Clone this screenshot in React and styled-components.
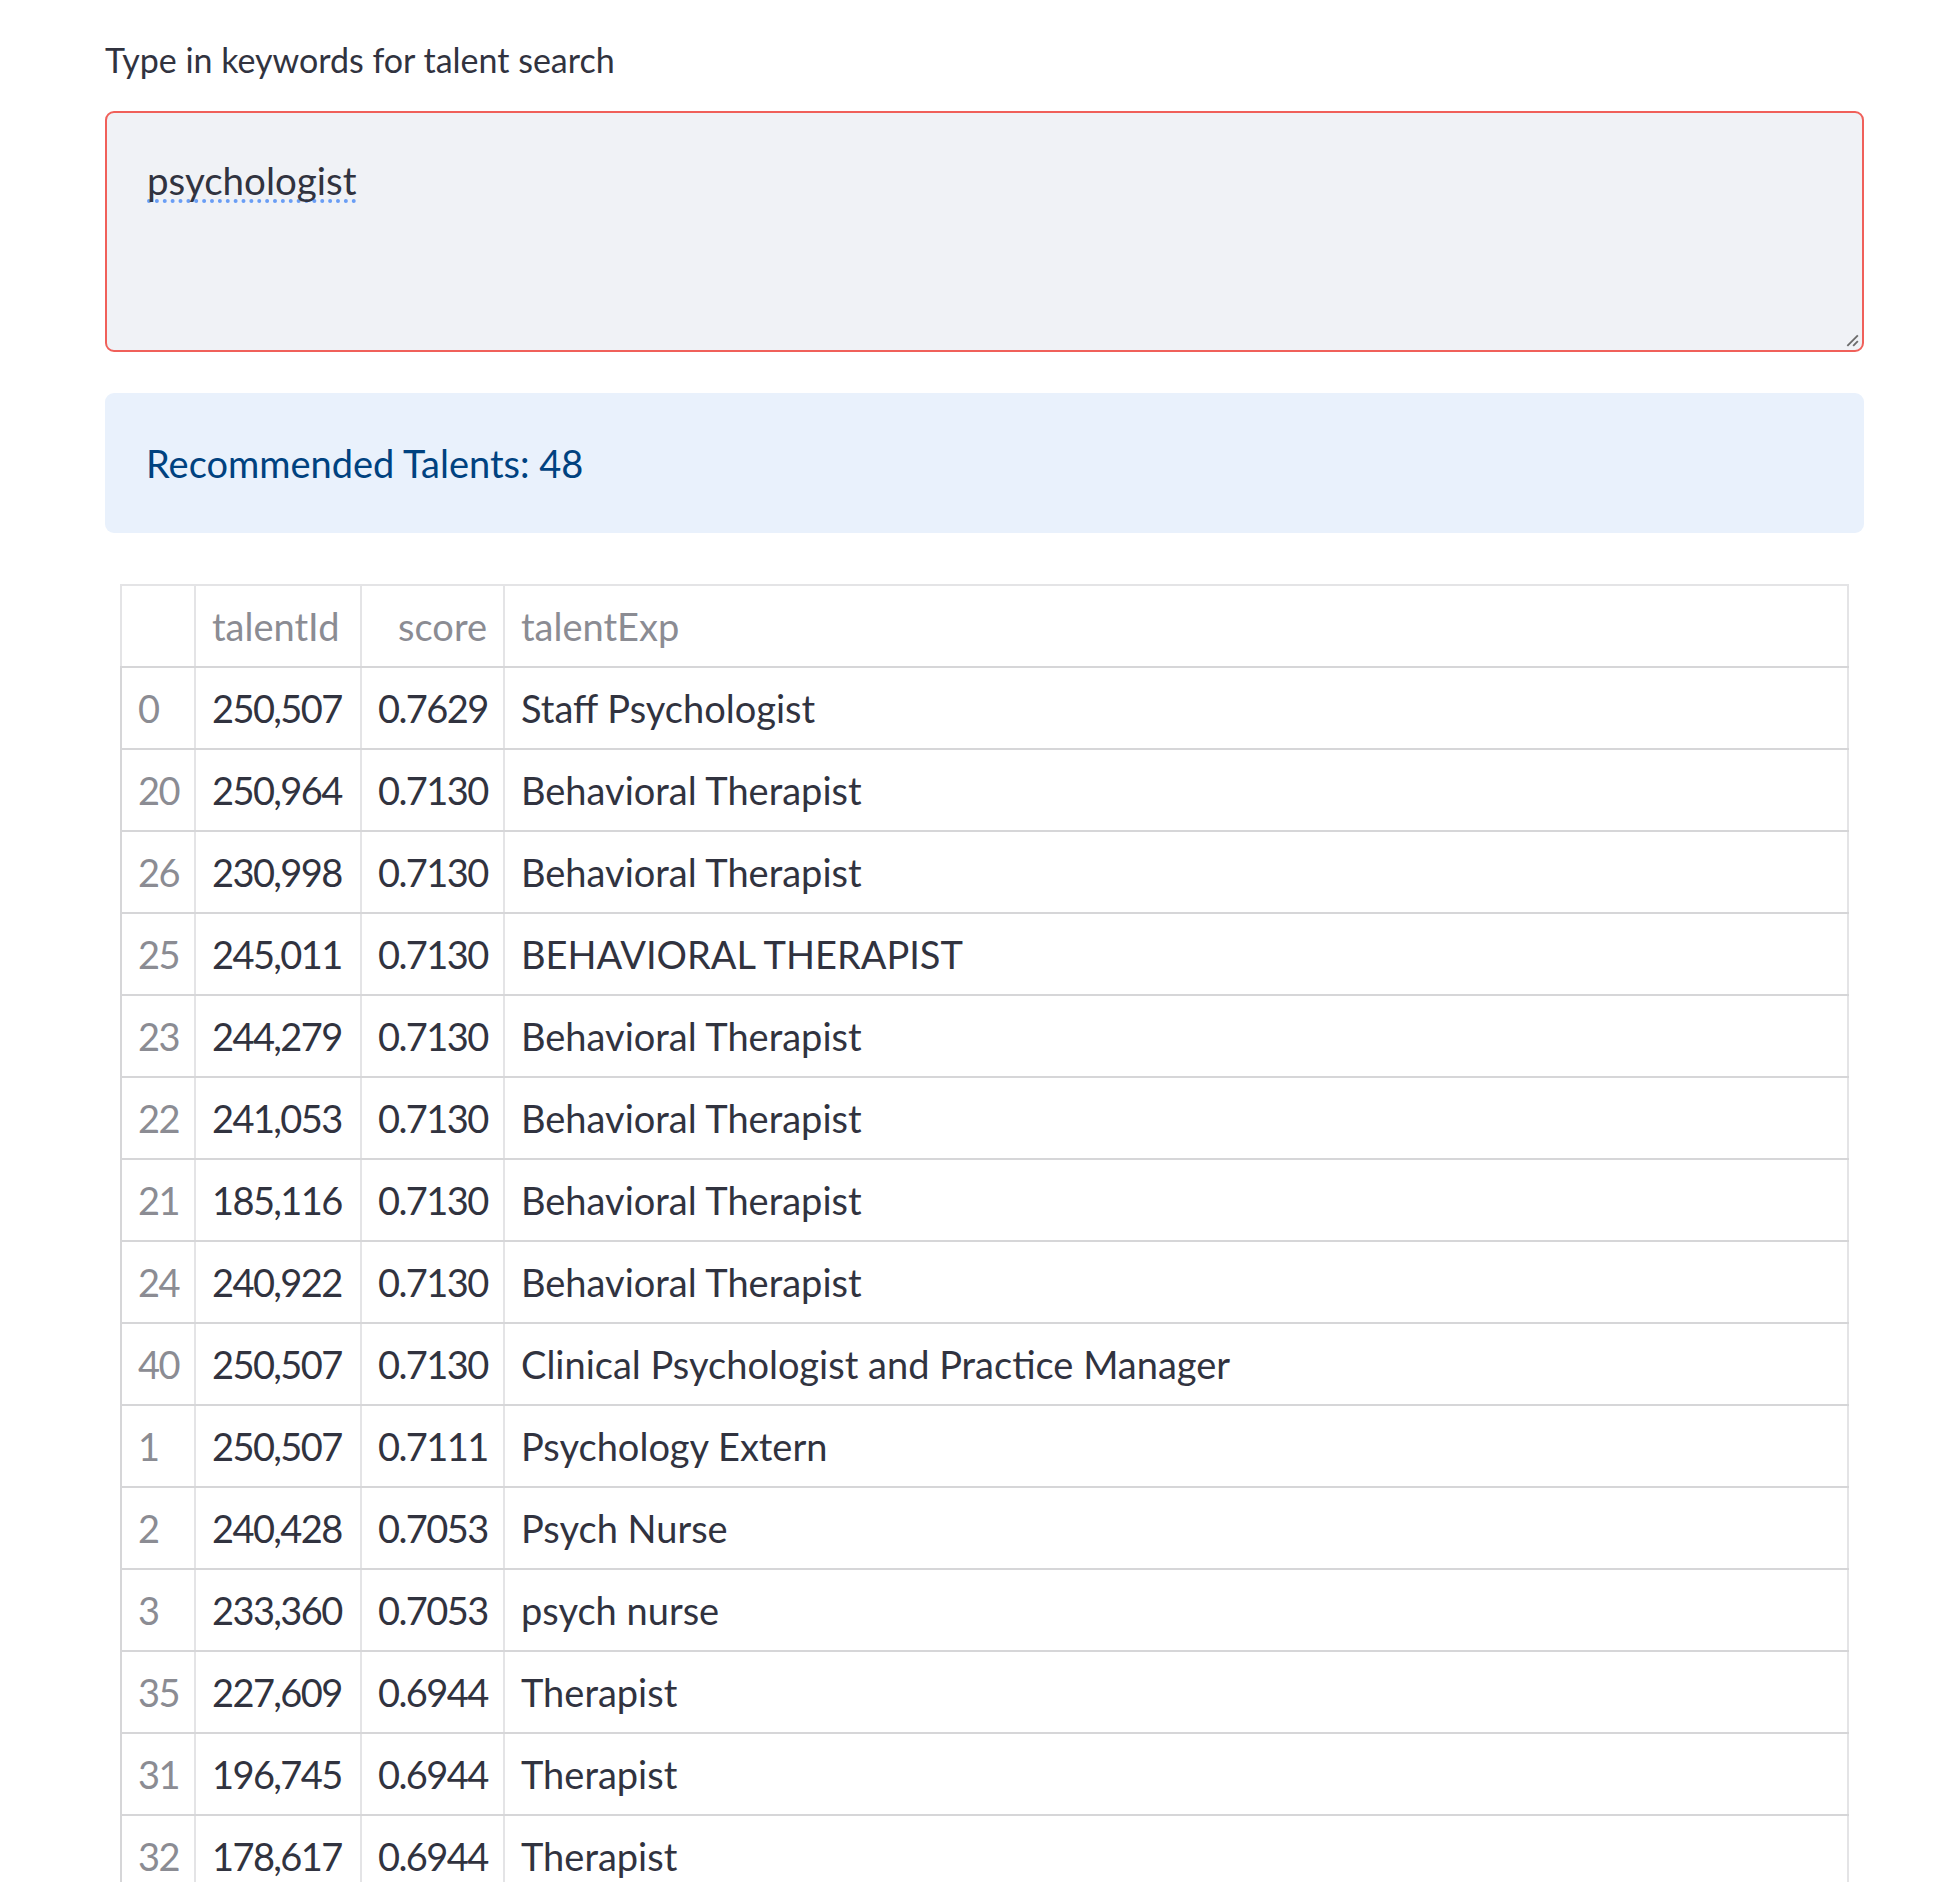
import React from "react";
import styled, { createGlobalStyle } from "styled-components";

const TOTAL = 48;

const rows = [
  { idx: 0, id: "250,507", score: "0.7629", exp: "Staff Psychologist" },
  { idx: 20, id: "250,964", score: "0.7130", exp: "Behavioral Therapist" },
  { idx: 26, id: "230,998", score: "0.7130", exp: "Behavioral Therapist" },
  { idx: 25, id: "245,011", score: "0.7130", exp: "BEHAVIORAL THERAPIST" },
  { idx: 23, id: "244,279", score: "0.7130", exp: "Behavioral Therapist" },
  { idx: 22, id: "241,053", score: "0.7130", exp: "Behavioral Therapist" },
  { idx: 21, id: "185,116", score: "0.7130", exp: "Behavioral Therapist" },
  { idx: 24, id: "240,922", score: "0.7130", exp: "Behavioral Therapist" },
  { idx: 40, id: "250,507", score: "0.7130", exp: "Clinical Psychologist and Practice Manager" },
  { idx: 1, id: "250,507", score: "0.7111", exp: "Psychology Extern" },
  { idx: 2, id: "240,428", score: "0.7053", exp: "Psych Nurse" },
  { idx: 3, id: "233,360", score: "0.7053", exp: "psych nurse" },
  { idx: 35, id: "227,609", score: "0.6944", exp: "Therapist" },
  { idx: 31, id: "196,745", score: "0.6944", exp: "Therapist" },
  { idx: 32, id: "178,617", score: "0.6944", exp: "Therapist" },
];

const App = () => {
  return (
    <>
      <GlobalStyle />
      <Page>
        <Label>Type in keywords for talent search</Label>
        <SearchBox>
          <Query>psychologist</Query>
          <Grip viewBox="0 0 12 12">
            <line x1="2" y1="11" x2="11" y2="2" />
            <line x1="7" y1="11" x2="11" y2="7" />
          </Grip>
        </SearchBox>
        <Info>Recommended Talents: {TOTAL}</Info>
        <TableWrap>
          <Table>
            <colgroup>
              <col style={{ width: 74 }} />
              <col style={{ width: 166 }} />
              <col style={{ width: 143 }} />
              <col />
            </colgroup>
            <thead>
              <tr>
                <Head />
                <Head numeric wide>talentId</Head>
                <Head numeric>score</Head>
                <Head>talentExp</Head>
              </tr>
            </thead>
            <tbody>
              {rows.map((row) => (
                <tr key={row.idx}>
                  <Index>{row.idx}</Index>
                  <Cell numeric wide>{row.id}</Cell>
                  <Cell numeric>{row.score}</Cell>
                  <Cell>{row.exp}</Cell>
                </tr>
              ))}
            </tbody>
          </Table>
        </TableWrap>
      </Page>
    </>
  );
};

const GlobalStyle = createGlobalStyle`
  body {
    margin: 0;
    background: #ffffff;
    font-family: Lato, "Noto Sans", sans-serif;
    color: #31333f;
  }
`;

const Page = styled.div`
  width: 1759px;
  margin-left: 105px;
  padding-top: 39px;
`;

const Label = styled.div`
  font-size: 34px;
  line-height: 42px;
  margin-bottom: 30px;
`;

const SearchBox = styled.div`
  position: relative;
  box-sizing: border-box;
  height: 241px;
  padding: 35px 40px;
  background: #f0f2f6;
  border: 2px solid #f0605a;
  border-radius: 9px;
`;

const Query = styled.span`
  font-size: 38.5px;
  line-height: 64px;
  text-decoration: underline dotted #6a9ef5;
  text-decoration-thickness: 4px;
  text-decoration-skip-ink: none;
  text-underline-offset: 4px;
`;

const Grip = styled.svg`
  position: absolute;
  right: 3px;
  bottom: 3px;
  width: 14px;
  height: 14px;
  stroke: #6b6b6b;
  stroke-width: 1.6;
`;

const Info = styled.div`
  margin-top: 41px;
  padding: 40px 41px;
  background: #e9f1fc;
  border-radius: 9px;
  color: rgb(0, 66, 128);
  font-size: 38px;
  line-height: 60px;
`;

const TableWrap = styled.div`
  margin: 51px 15px 0;
`;

const Table = styled.table`
  width: 100%;
  table-layout: fixed;
  border-collapse: collapse;
  border: 2px solid #e8e8ea;
  font-size: 38px;
`;

const Head = styled.th`
  height: 82px;
  box-sizing: border-box;
  padding: 0 ${(p) => (p.wide ? "22px" : "16px")} 0 16px;
  font-weight: 400;
  color: #8b8c93;
  text-align: ${(p) => (p.numeric ? "right" : "left")};
  border: 2px solid #e4e4e6;
  border-bottom-color: #d6d6d8;
  white-space: nowrap;
`;

const Cell = styled.td`
  height: 82px;
  box-sizing: border-box;
  padding: 0 ${(p) => (p.wide ? "22px" : "16px")} 0 16px;
  text-align: ${(p) => (p.numeric ? "right" : "left")};
  letter-spacing: ${(p) => (p.numeric ? "-1.6px" : "normal")};
  border: 2px solid #d6d6d8;
  border-right-color: #e4e4e6;
  white-space: nowrap;
`;

const Index = styled(Cell)`
  color: #8b8c93;
  text-align: left;
  letter-spacing: -1.6px;
`;

export default App;
